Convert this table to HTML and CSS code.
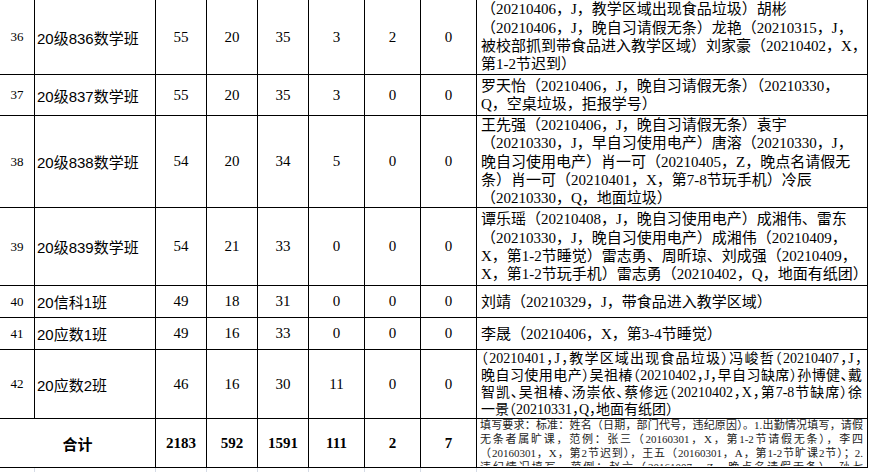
FILE: index.html
```html
<!DOCTYPE html>
<html lang="zh-CN">
<head>
<meta charset="utf-8">
<title>班级考勤汇总</title>
<link rel="stylesheet" href="styles.css">
</head>
<body>
<table class="sheet">
  <colgroup>
    <col class="c-no">
    <col class="c-name">
    <col class="c-num">
    <col class="c-num">
    <col class="c-num">
    <col class="c-num2">
    <col class="c-num2">
    <col class="c-num2">
    <col class="c-note">
  </colgroup>
  <tbody>
    <tr class="r36">
      <td class="no">36</td>
      <td class="name">20级836数学班</td>
      <td class="num">55</td><td class="num">20</td><td class="num">35</td>
      <td class="num">3</td><td class="num">2</td><td class="num">0</td>
      <td class="note">（20210406，J，教学区域出现食品垃圾）胡彬<br>（20210406，J，晚自习请假无条）龙艳（20210315，J，<br>被校部抓到带食品进入教学区域）刘家豪（20210402，X，<br>第1-2节迟到）</td>
    </tr>
    <tr class="r37">
      <td class="no">37</td>
      <td class="name">20级837数学班</td>
      <td class="num">55</td><td class="num">20</td><td class="num">35</td>
      <td class="num">3</td><td class="num">0</td><td class="num">0</td>
      <td class="note">罗天怡（20210406，J，晚自习请假无条）（20210330，<br>Q，空桌垃圾，拒报学号）</td>
    </tr>
    <tr class="r38">
      <td class="no">38</td>
      <td class="name">20级838数学班</td>
      <td class="num">54</td><td class="num">20</td><td class="num">34</td>
      <td class="num">5</td><td class="num">0</td><td class="num">0</td>
      <td class="note">王先强（20210406，J，晚自习请假无条）袁宇<br>（20210330，J，早自习使用电产）唐溶（20210330，J，<br>晚自习使用电产）肖一可（20210405，Z，晚点名请假无<br>条）肖一可（20210401，X，第7-8节玩手机）冷辰<br>（20210330，Q，地面垃圾）</td>
    </tr>
    <tr class="r39">
      <td class="no">39</td>
      <td class="name">20级839数学班</td>
      <td class="num">54</td><td class="num">21</td><td class="num">33</td>
      <td class="num">0</td><td class="num">0</td><td class="num">0</td>
      <td class="note">谭乐瑶（20210408，J，晚自习使用电产）成湘伟、雷东<br>（20210330，J，晚自习使用电产）成湘伟（20210409，<br>X，第1-2节睡觉）雷志勇、周昕琼、刘成强（20210409，<br>X，第1-2节玩手机）雷志勇（20210402，Q，地面有纸团）</td>
    </tr>
    <tr class="r40">
      <td class="no">40</td>
      <td class="name">20信科1班</td>
      <td class="num">49</td><td class="num">18</td><td class="num">31</td>
      <td class="num">0</td><td class="num">0</td><td class="num">0</td>
      <td class="note">刘靖（20210329，J，带食品进入教学区域）</td>
    </tr>
    <tr class="r41">
      <td class="no">41</td>
      <td class="name">20应数1班</td>
      <td class="num">49</td><td class="num">16</td><td class="num">33</td>
      <td class="num">0</td><td class="num">0</td><td class="num">0</td>
      <td class="note">李晟（20210406，X，第3-4节睡觉）</td>
    </tr>
    <tr class="r42">
      <td class="no">42</td>
      <td class="name">20应数2班</td>
      <td class="num">46</td><td class="num">16</td><td class="num">30</td>
      <td class="num">11</td><td class="num">0</td><td class="num">0</td>
      <td class="note note-compact">
        <span class="jl">（20210401，J，教学区域出现食品垃圾）冯峻哲（20210407，J，</span>
        <span class="jl">晚自习使用电产）吴祖椿（20210402，J，早自习缺席）孙博健、戴</span>
        <span class="jl">智凯、吴祖椿、汤崇依、蔡修远（20210402，X，第7-8节缺席）徐</span>
        <span class="jl jl-last">一景（20210331，Q，地面有纸团）</span>
      </td>
    </tr>
    <tr class="total">
      <td class="total-label" colspan="2">合计</td>
      <td class="num bold">2183</td><td class="num bold">592</td><td class="num bold">1591</td>
      <td class="num bold">111</td><td class="num bold">2</td><td class="num bold">7</td>
      <td class="rules">
        <div class="rules-inner">
          <span class="rl">填写要求：标准：姓名（日期，部门代号，违纪原因）。1.出勤情况填写，请假</span>
          <span class="rl">无条者属旷课，范例：张三（20160301，X，第1-2节请假无条），李四</span>
          <span class="rl">（20160301，X，第2节迟到），王五（20160301，A，第1-2节旷课2节）；2.</span>
          <span class="rl">违纪情况填写，范例：赵六（20161007，Z，晚点名请假无条），孙七</span>
        </div>
      </td>
    </tr>
    <tr class="ghost">
      <td></td><td></td><td></td><td></td><td></td><td></td><td></td><td></td><td class="ghost-last"></td>
    </tr>
  </tbody>
</table>
</body>
</html>
```

FILE: styles.css
```css
html, body {
  margin: 0;
  padding: 0;
  overflow: hidden;
  background: #ffffff;
}

body {
  width: 872px;
  height: 472px;
  font-family: "Liberation Serif", "Noto Sans CJK SC", serif;
  color: #000000;
}

.sheet {
  border-collapse: separate;
  border-spacing: 0;
  table-layout: fixed;
  width: 868px;
}

.c-no { width: 35px; }
.c-name { width: 121px; }
.c-num { width: 51px; }
.c-num2 { width: 56px; }
.c-note { width: 391px; }

.sheet td {
  box-sizing: border-box;
  border-right: 1px solid #000000;
  border-bottom: 1px solid #000000;
  padding: 0;
  vertical-align: middle;
  overflow: hidden;
  white-space: nowrap;
}

.r36 td { height: 75px; }
.r37 td { height: 41px; }
.r38 td { height: 92px; }
.r39 td { height: 78px; }
.r40 td { height: 32px; }
.r41 td { height: 32px; }
.r42 td { height: 69px; }
.total td { height: 49px; }

.no {
  text-align: center;
  font-size: 13px;
}

.name {
  text-align: left;
  padding-left: 2px !important;
  font-size: 15px;
  font-family: "Liberation Sans", "Noto Sans CJK SC", sans-serif;
}

.num {
  text-align: center;
  font-size: 15px;
}

.bold {
  font-weight: bold;
}

.note {
  font-size: 15px;
  line-height: 18.3px;
  padding-left: 4px !important;
  text-align: left;
}

.note-compact {
  font-size: 14px;
  line-height: 17px;
  font-feature-settings: "halt";
  padding-right: 5px !important;
}

.jl {
  display: block;
  text-align: justify;
  text-align-last: justify;
}

.jl.jl-last {
  text-align: left;
  text-align-last: left;
}

.total-label {
  text-align: center;
  font-weight: bold;
  font-size: 15px;
  font-family: "Noto Sans CJK SC", sans-serif;
}

.rules {
  vertical-align: top !important;
  padding: 0 4px 0 3px !important;
}

.rules-inner {
  height: 48px;
  overflow: hidden;
  font-size: 11px;
  line-height: 14px;
  color: #1c1c1c;
  padding-top: 0;
  margin-top: -1px;
}

.rl {
  display: block;
  text-align: justify;
  text-align-last: justify;
  white-space: nowrap;
}

.ghost td {
  height: 20px;
  border-bottom: none;
  border-right: 1px solid #d5dbe6;
}

.ghost td.ghost-last {
  border-right: none;
}
```
